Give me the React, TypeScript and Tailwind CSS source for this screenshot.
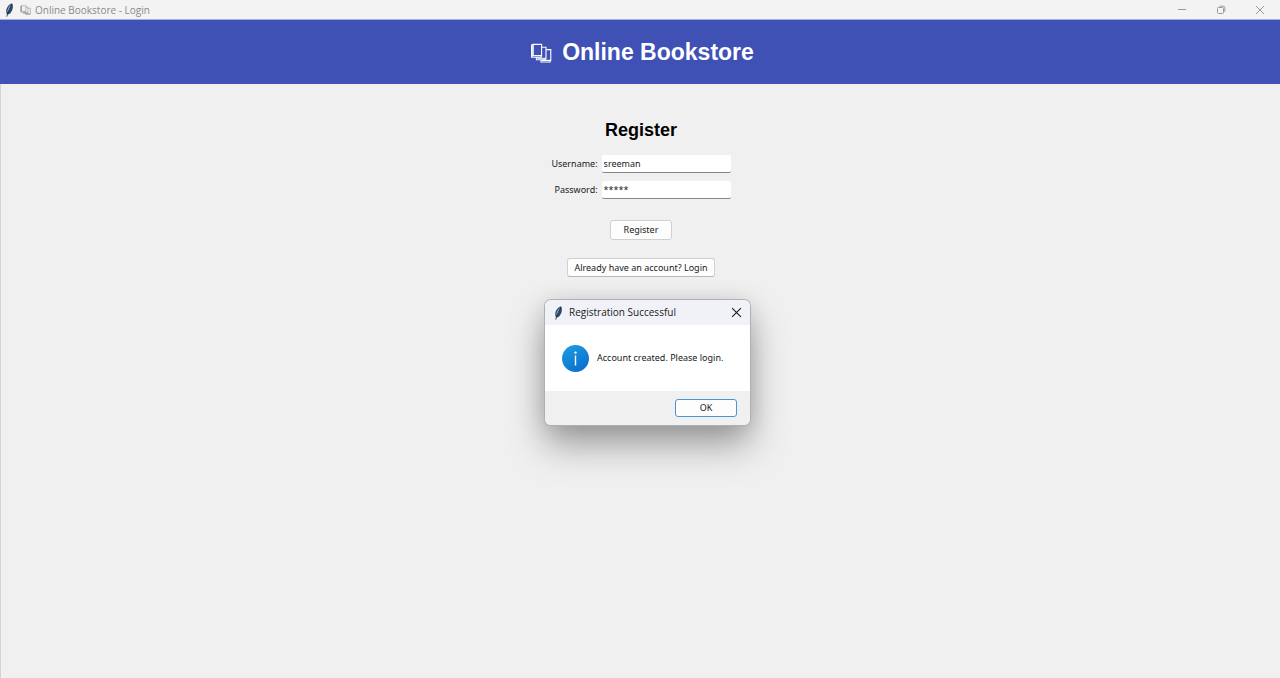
import { useState } from 'react';

function Feather({ className }: { className: string }) {
  return (
    <svg viewBox="0 0 10 16" className={className} aria-hidden="true">
      <path d="M8.6 0.6C10.2 3 9.6 7.8 7.2 10.8C6 12.4 4.4 13.2 2.8 13.2C0.8 9.4 2.2 5.2 4.8 2.6C6.2 1.3 7.6 0.5 8.6 0.6Z" fill="#2f4a68" />
      <path d="M7.4 1.8C4.6 4 2.8 7.6 3 11.2C5 9 6.6 5.6 7.4 1.8Z" fill="#8db4dc" />
      <path d="M8.4 1.2C6.4 5 4 9.6 2.4 15.6" fill="none" stroke="#1b2430" strokeWidth="0.9" />
    </svg>
  );
}

function Books({ className }: { className: string }) {
  return (
    <svg viewBox="0 0 22 20" className={className} fill="none" stroke="currentColor" strokeWidth="1.1" aria-hidden="true">
      <path d="M3.2 1.4H11.6V12.6H3.2Z" />
      <path d="M3.2 1.4L1.6 2V14.2H11.2V12.6" />
      <path d="M2.2 2.2V13.4" strokeWidth="1.2" />
      <path d="M11.8 4.2H16V15.2H8V14.4" />
      <path d="M6.4 14.4V16.8H15.4V15.2" />
      <path d="M16.2 6.6H20.8V17.4H12.4V17" />
      <path d="M11 17V19H20.2V17.4" />
    </svg>
  );
}

function Cross({ className }: { className: string }) {
  return (
    <svg viewBox="0 0 10 10" className={className} fill="none" stroke="currentColor" aria-hidden="true">
      <path d="M1 1L9 9M9 1L1 9" />
    </svg>
  );
}

function TitleBar() {
  return (
    <div className="flex h-5 items-center justify-between border-b border-[#a9b0d6] bg-[#f3f3f3] text-[#8a8a8a]">
      <div className="flex items-center pl-1">
        <Feather className="h-3.5 w-2.5" />
        <Books className="ml-1.5 h-2.5 w-[11px]" />
        <span className="ml-1 font-['Open_Sans','Noto_Sans',sans-serif] text-[10px] leading-4">Online Bookstore - Login</span>
      </div>
      <div className="flex items-center text-[#9a9a9a]">
        <button type="button" aria-label="Minimize" className="flex w-[39px] justify-center">
          <svg viewBox="0 0 10 10" className="size-2.5" stroke="currentColor" aria-hidden="true">
            <path d="M1 4.5H9" />
          </svg>
        </button>
        <button type="button" aria-label="Restore" className="flex w-[39px] justify-center">
          <svg viewBox="0 0 10 10" className="size-2.5" fill="none" stroke="currentColor" aria-hidden="true">
            <rect x="1.5" y="2.5" width="6" height="6" rx="1" />
            <path d="M3.5 1.2H7.2Q8.8 1.2 8.8 2.8V6.8" />
          </svg>
        </button>
        <button type="button" aria-label="Close" className="flex w-10 justify-center">
          <Cross className="size-2.5" />
        </button>
      </div>
    </div>
  );
}

function Field({ id, label, value, onChange }: { id: string; label: string; value: string; onChange: (v: string) => void }) {
  return (
    <>
      <label htmlFor={id} className="text-right">
        {label}
      </label>
      <input
        id={id}
        autoComplete="off"
        value={value}
        onChange={(e) => onChange(e.target.value)}
        className="h-[18px] w-[129px] rounded-xs border-b border-[#868686] bg-white px-0.5 outline-none"
      />
    </>
  );
}

function SuccessDialog({ onClose }: { onClose: () => void }) {
  return (
    <div
      role="dialog"
      aria-labelledby="dialog-title"
      className="absolute top-[300px] left-[calc(50%-95px)] w-[205px] overflow-hidden rounded-md bg-white shadow-[0_0_0_1px_#b0b0b0,0_20px_36px_rgba(0,0,0,0.34),0_2px_24px_rgba(0,0,0,0.12)]"
    >
      <div className="flex h-[25px] items-center bg-[#f1f2f8] px-2">
        <Feather className="h-3.5 w-2.5" />
        <h2 id="dialog-title" className="ml-1.5 flex-1 font-['Open_Sans','Noto_Sans',sans-serif] text-[10px]">
          Registration Successful
        </h2>
        <button type="button" aria-label="Close" onClick={onClose}>
          <Cross className="size-[11px]" />
        </button>
      </div>
      <div className="flex h-[66px] items-center gap-2 pl-[17px]">
        <svg viewBox="0 0 27 27" className="size-[27px]" aria-hidden="true">
          <defs>
            <linearGradient id="info-fill" x1="0" y1="0" x2="0.6" y2="1">
              <stop offset="0" stopColor="#1f9fe2" />
              <stop offset="1" stopColor="#0a70cf" />
            </linearGradient>
          </defs>
          <circle cx="13.5" cy="13.5" r="13.5" fill="url(#info-fill)" />
          <circle cx="13.5" cy="7.6" r="1.2" fill="#fff" />
          <path d="M13.5 10.4V20.6" stroke="#fff" strokeWidth="1.4" />
        </svg>
        <p>Account created. Please login.</p>
      </div>
      <div className="flex justify-end bg-[#f0f0f0] px-[13px] py-2">
        <button type="button" onClick={onClose} className="h-[18px] w-[62px] rounded-[3px] border border-[#4a96d6] bg-[#fdfdfd]">
          OK
        </button>
      </div>
    </div>
  );
}

export default function App() {
  const [username, setUsername] = useState('sreeman');
  const [password, setPassword] = useState('*****');
  const [open, setOpen] = useState(true);

  return (
    <div className="relative min-h-screen bg-[#f0f0f0] font-['Noto_Sans','Open_Sans',sans-serif] text-[9px] text-[#1a1a1a]">
      <TitleBar />
      <header className="flex h-16 items-center justify-center gap-2.5 bg-[#3f51b5] pl-1 text-white">
        <Books className="mt-0.5 h-5 w-[22px]" />
        <h1 className="font-['Liberation_Sans',Arial,sans-serif] text-[23px] leading-8 font-bold">Online Bookstore</h1>
      </header>
      <main className="flex min-h-[calc(100vh-84px)] flex-col items-center border-l border-[#d4d4d4] pt-[34px] pl-px">
        <h2 className="font-['Liberation_Sans',Arial,sans-serif] text-lg leading-6 font-bold text-black">Register</h2>
        <form className="flex flex-col items-center" onSubmit={(e) => e.preventDefault()}>
          <div className="mt-[13px] grid grid-cols-[auto_auto] items-center gap-x-1 gap-y-2">
            <Field id="username" label="Username:" value={username} onChange={setUsername} />
            <Field id="password" label="Password:" value={password} onChange={setPassword} />
          </div>
          <button type="submit" className="mt-[21px] h-5 w-[62px] rounded-[3px] border border-[#d0d0d0] bg-[#fdfdfd]">
            Register
          </button>
          <button type="button" className="mt-[18px] h-[19px] rounded-[3px] border border-[#d0d0d0] border-b-[#b8b8b8] bg-[#fdfdfd] px-1.5">
            Already have an account? Login
          </button>
        </form>
      </main>
      {open && <SuccessDialog onClose={() => setOpen(false)} />}
    </div>
  );
}
